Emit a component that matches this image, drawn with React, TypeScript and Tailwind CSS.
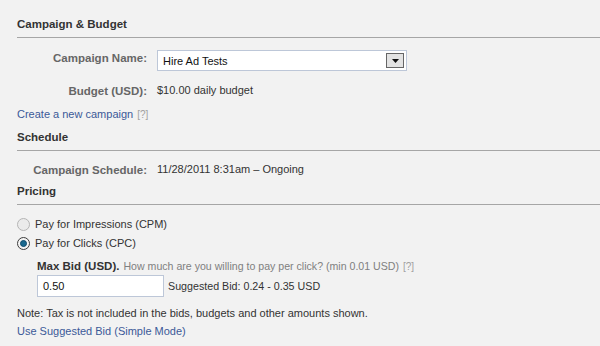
import React from 'react';

const font = { fontFamily: '"Liberation Sans", Arial, sans-serif' };

function Heading({ title, top }: { title: string; top: string }) {
  return (
    <div className={top}>
      <div className="h-[16px] leading-[16px] text-[11.5px] font-bold text-[#333]">{title}</div>
      <div className="h-[5px]" />
      <div className="h-px bg-[#a6a6a6]" />
    </div>
  );
}

function Field({ label, children, h, top }: { label: string; children: React.ReactNode; h: string; top: string }) {
  return (
    <div className={`flex items-center ${h} ${top}`}>
      <div className="w-[130px] text-right text-[11.5px] font-bold text-[#666] leading-[14px]">{label}</div>
      <div className="ml-[10px] text-[11px] text-[#333] flex items-center">{children}</div>
    </div>
  );
}

function Radio({ checked, label }: { checked?: boolean; label: string }) {
  return (
    <div className="flex items-center h-[19px]">
      <span
        className={`w-[13px] h-[13px] rounded-full border flex items-center justify-center ${
          checked ? 'border-[#3c3c3c] bg-[#f4f4f4]' : 'border-[#b5b5b5] bg-[#ebebeb]'
        }`}
      >
        {checked && <span className="w-[7px] h-[7px] rounded-full bg-[#19698f] border border-[#0d4a6b]" />}
      </span>
      <span className="ml-[5px] text-[11px] text-[#333]">{label}</span>
    </div>
  );
}

export default function App() {
  return (
    <div className="w-[600px] h-[346px] bg-[#f2f2f2] pl-[17px] pt-[16px] overflow-hidden" style={font}>
      <Heading title="Campaign & Budget" top="" />
      <div className="flex h-[21px] mt-[12px]">
        <div className="w-[130px] text-right text-[11.5px] font-bold text-[#666] leading-[14px] pt-[1px]">Campaign Name:</div>
        <div className="ml-[10px] w-[250px] h-[21px] bg-white border border-[#bdc7d8] flex items-center justify-between pl-[5px] pr-[2px]">
          <span className="text-[11px] text-[#111] pt-[1px]">Hire Ad Tests</span>
          <span className="w-[18px] h-[15px] border border-[#666] bg-[#e3e3e3] flex items-center justify-center">
            <svg width="7" height="4" viewBox="0 0 7 4"><path d="M0 0h7L3.5 4z" fill="#111" /></svg>
          </span>
        </div>
      </div>
      <Field label="Budget (USD):" h="h-[14px]" top="mt-[13px]">
        <span className="leading-[14px] -mt-[2px]">$10.00 daily budget</span>
      </Field>
      <div className="h-[14px] leading-[14px] mt-[9px] text-[11px]">
        <span className="text-[#3b5998]">Create a new campaign</span>
        <span className="text-[#a0a0a0] ml-[4px] text-[10px]">[?]</span>
      </div>
      <Heading title="Schedule" top="mt-[8px]" />
      <Field label="Campaign Schedule:" h="h-[14px]" top="mt-[12px]">
        <span className="leading-[14px] -mt-[2px]">11/28/2011 8:31am – Ongoing</span>
      </Field>
      <Heading title="Pricing" top="mt-[6px]" />
      <div className="mt-[10px]">
        <Radio label="Pay for Impressions (CPM)" />
        <Radio checked label="Pay for Clicks (CPC)" />
      </div>
      <div className="pl-[20px] mt-[6px]">
        <div className="h-[14px] leading-[14px] text-[11px] whitespace-nowrap">
          <span className="font-bold text-[#333] text-[11.5px]">Max Bid (USD).</span>
          <span className="text-[#808080] ml-[4px] text-[10.6px]">How much are you willing to pay per click? (min 0.01 USD)</span>
          <span className="text-[#a0a0a0] ml-[4px] text-[10px]">[?]</span>
        </div>
        <div className="flex items-center mt-[2px]">
          <div className="w-[127px] h-[22px] bg-white border border-[#bdc7d8] flex items-center pl-[5px] text-[11px] text-[#111]">0.50</div>
          <span className="ml-[4px] text-[10.7px] text-[#333]">Suggested Bid: 0.24 - 0.35 USD</span>
        </div>
      </div>
      <div className="mt-[9px] h-[14px] leading-[14px] text-[11px] text-[#333] whitespace-nowrap">
        Note: Tax is not included in the bids, budgets and other amounts shown.
      </div>
      <div className="mt-[4px] h-[14px] leading-[14px] text-[11px] text-[#3b5998]">Use Suggested Bid (Simple Mode)</div>
    </div>
  );
}
